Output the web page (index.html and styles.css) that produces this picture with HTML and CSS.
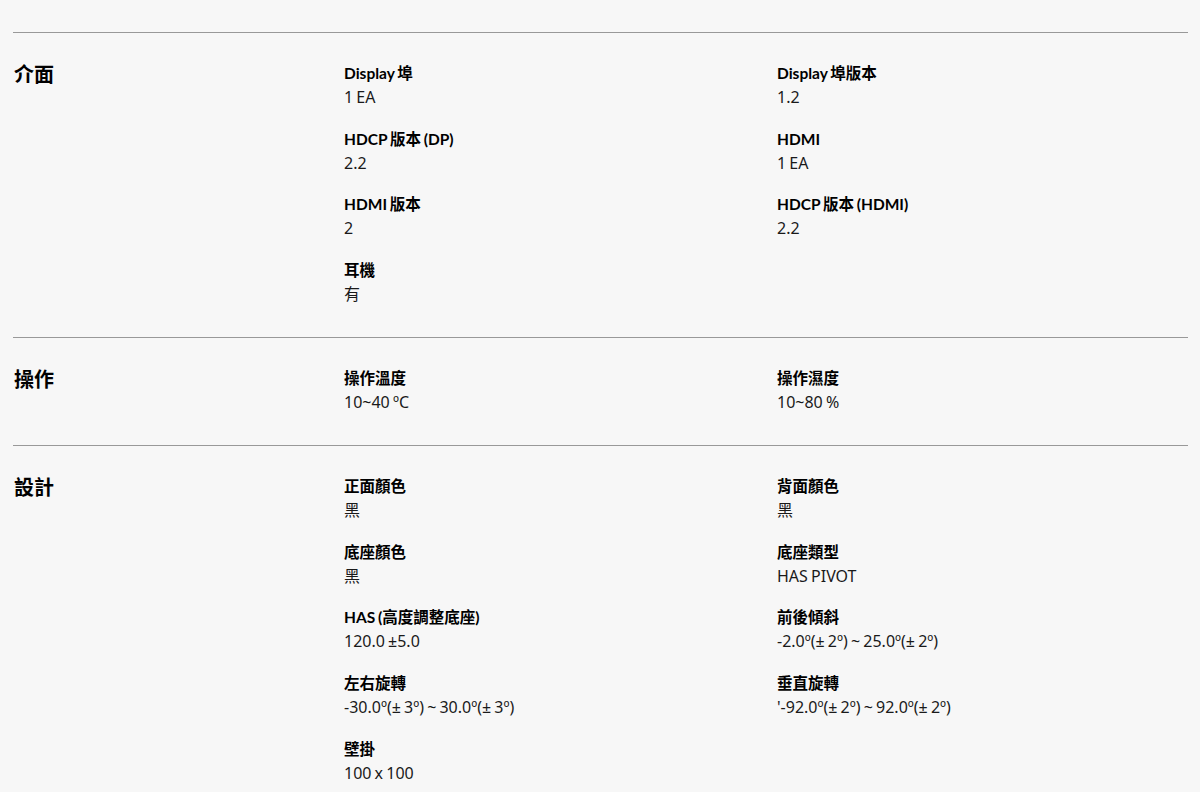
FILE: index.html
```html
<!DOCTYPE html>
<html lang="zh-Hant">
<head>
<meta charset="utf-8">
<title>規格</title>
<link rel="stylesheet" href="styles.css">
</head>
<body>
<div class="specs">
  <section class="spec-section">
    <h3 class="spec-title">介面</h3>
    <div class="spec-list">
      <div class="spec-item"><p class="spec-name">Display 埠</p><p class="spec-value">1 EA</p></div>
      <div class="spec-item"><p class="spec-name">Display 埠版本</p><p class="spec-value">1.2</p></div>
      <div class="spec-item"><p class="spec-name">HDCP 版本 (DP)</p><p class="spec-value">2.2</p></div>
      <div class="spec-item"><p class="spec-name">HDMI</p><p class="spec-value">1 EA</p></div>
      <div class="spec-item"><p class="spec-name">HDMI 版本</p><p class="spec-value">2</p></div>
      <div class="spec-item"><p class="spec-name">HDCP 版本 (HDMI)</p><p class="spec-value">2.2</p></div>
      <div class="spec-item"><p class="spec-name">耳機</p><p class="spec-value">有</p></div>
    </div>
  </section>
  <section class="spec-section">
    <h3 class="spec-title">操作</h3>
    <div class="spec-list">
      <div class="spec-item"><p class="spec-name">操作溫度</p><p class="spec-value">10~40 ºC</p></div>
      <div class="spec-item"><p class="spec-name">操作濕度</p><p class="spec-value">10~80 %</p></div>
    </div>
  </section>
  <section class="spec-section">
    <h3 class="spec-title">設計</h3>
    <div class="spec-list">
      <div class="spec-item"><p class="spec-name">正面顏色</p><p class="spec-value">黑</p></div>
      <div class="spec-item"><p class="spec-name">背面顏色</p><p class="spec-value">黑</p></div>
      <div class="spec-item"><p class="spec-name">底座顏色</p><p class="spec-value">黑</p></div>
      <div class="spec-item"><p class="spec-name">底座類型</p><p class="spec-value">HAS PIVOT</p></div>
      <div class="spec-item"><p class="spec-name">HAS (高度調整底座)</p><p class="spec-value">120.0 ±5.0</p></div>
      <div class="spec-item"><p class="spec-name">前後傾斜</p><p class="spec-value">-2.0º(± 2º) ~ 25.0º(± 2º)</p></div>
      <div class="spec-item"><p class="spec-name">左右旋轉</p><p class="spec-value">-30.0º(± 3º) ~ 30.0º(± 3º)</p></div>
      <div class="spec-item"><p class="spec-name">垂直旋轉</p><p class="spec-value">'-92.0º(± 2º) ~ 92.0º(± 2º)</p></div>
      <div class="spec-item"><p class="spec-name">壁掛</p><p class="spec-value">100 x 100</p></div>
    </div>
  </section>
</div>
</body>
</html>
```
FILE: styles.css
```css
html, body {
  margin: 0;
  padding: 0;
  background: #f7f7f7;
}
body {
  font-family: "Noto Sans", "Noto Sans CJK TC", sans-serif;
  color: #000;
}
.specs {
  width: 1175px;
  margin-left: 13px;
  padding-top: 32px;
}
.spec-section {
  display: grid;
  grid-template-columns: 331px 1fr;
  border-top: 1px solid #999;
  padding: 28px 0 31px;
}
.spec-title {
  margin: 0;
  padding-left: 1px;
  font-family: "Lato", "Noto Sans CJK TC", sans-serif;
  font-size: 20px;
  line-height: 26px;
  font-weight: 700;
}
.spec-list {
  display: grid;
  grid-template-columns: 433px 1fr;
  row-gap: 17.67px;
}
.spec-item p {
  margin: 0;
  line-height: 24px;
}
.spec-name {
  font-family: "Lato", "Noto Sans CJK TC", sans-serif;
  font-size: 15.5px;
  font-weight: 700;
  word-spacing: -1px;
}
.spec-value {
  font-size: 16px;
  color: #1a1a1a;
  word-spacing: -1px;
}
```
